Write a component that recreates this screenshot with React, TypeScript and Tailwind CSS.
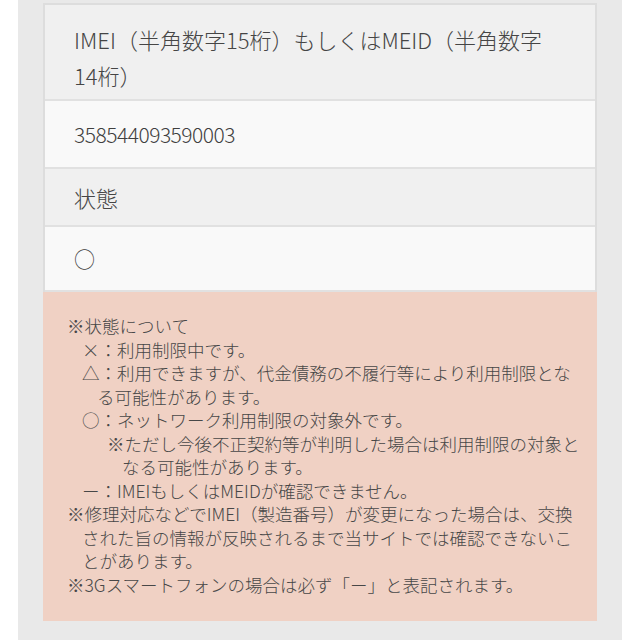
const font = { fontFamily: '"Noto Sans CJK JP", "Noto Sans", sans-serif' };

function LabelRow({ children, className = "" }: { children: React.ReactNode; className?: string }) {
  return (
    <div className={`bg-[#f0f0f0] border-b-2 border-[#e1e1e1] px-[29px] text-[22px] leading-[36px] font-light text-[#454545] ${className}`}>
      {children}
    </div>
  );
}

function ValueRow({ children, className = "" }: { children: React.ReactNode; className?: string }) {
  return (
    <div className={`bg-[#f9f9f9] border-b-2 border-[#e1e1e1] px-[29px] text-[21px] leading-[36px] font-light text-[#3f3f3f] ${className}`}>
      {children}
    </div>
  );
}

export default function App() {
  return (
    <div className="w-[640px] h-[640px] bg-white flex justify-center" style={font}>
      <div className="w-[604px] h-full bg-[#e9e9e9] px-[25px] pt-[3px]">
        <div className="border-x-2 border-t-2 border-[#dddddd]">
          <LabelRow className="pt-[16px] pb-[6px] pr-[40px]">
            IMEI（半角数字15桁）もしくはMEID（半角数字
            <br />
            14桁）
          </LabelRow>
          <ValueRow className="py-[15px] tracking-[-0.5px]">358544093590003</ValueRow>
          <LabelRow className="pt-[10px] pb-[10px]">状態</LabelRow>
          <ValueRow className="pt-[13px] pb-[14px]">○</ValueRow>
        </div>
        <div className="bg-[#f0d1c4] pl-[24px] pr-[2px] pt-[22px] pb-[25px] text-[17.5px] leading-[23.5px] font-light text-[#474747] whitespace-nowrap">
          <p>※状態について</p>
          <div className="pl-[15px]">
            <p>×：利用制限中です。</p>
            <p className="pl-[15px] -indent-[15px]">
              △：利用できますが、代金債務の不履行等により利用制限とな
              <br />
              る可能性があります。
            </p>
            <p>○：ネットワーク利用制限の対象外です。</p>
            <p className="pl-[40px] -indent-[15px]">
              ※ただし今後不正契約等が判明した場合は利用制限の対象と
              <br />
              なる可能性があります。
            </p>
            <p>ー：IMEIもしくはMEIDが確認できません。</p>
          </div>
          <p className="pl-[15px] -indent-[15px]">
            ※修理対応などでIMEI（製造番号）が変更になった場合は、交換
            <br />
            された旨の情報が反映されるまで当サイトでは確認できないこ
            <br />
            とがあります。
          </p>
          <p>※3Gスマートフォンの場合は必ず「ー」と表記されます。</p>
        </div>
      </div>
    </div>
  );
}
